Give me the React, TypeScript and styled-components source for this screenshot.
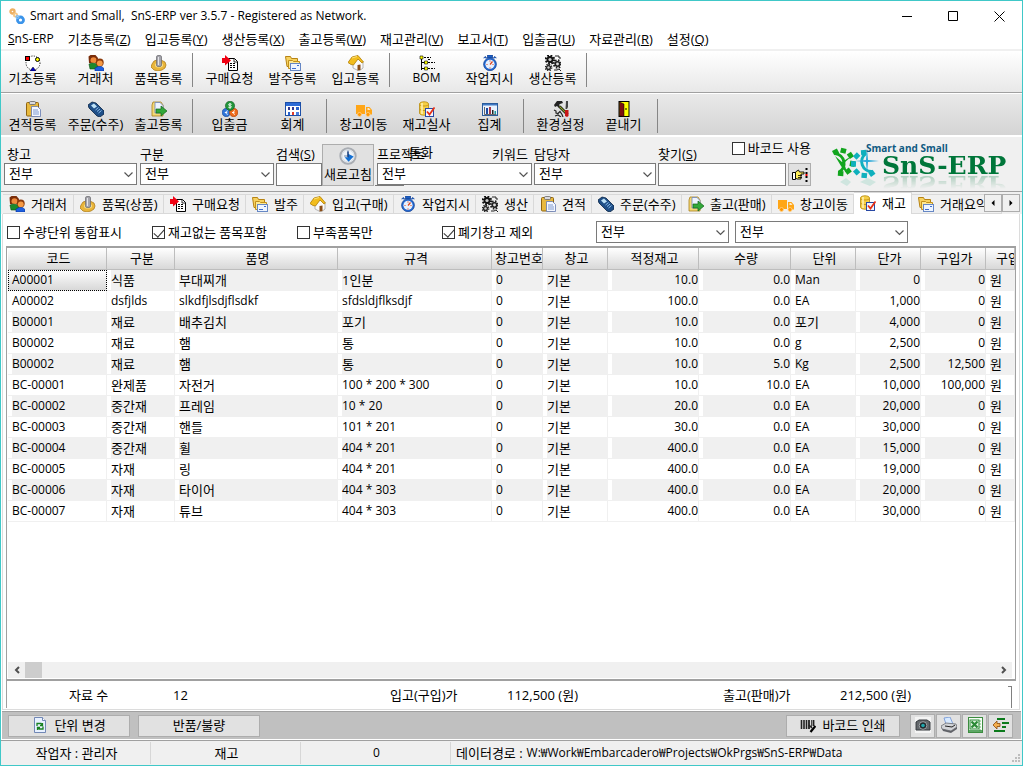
import React from "react";
import styled, { createGlobalStyle, css } from "styled-components";

const GlobalStyle = createGlobalStyle`
  * { box-sizing: border-box; }
  body { margin: 0; background: #fff; }
  body, button, input, select {
    font-family: "Open Sans", "Noto Sans CJK KR", sans-serif;
    font-size: 13px;
    line-height: 16px;
    color: #000;
  }
`;

/* ---------- icons ---------- */

type IconName =
  | "basic" | "people" | "item" | "request" | "folders" | "house" | "bom" | "watch" | "gears"
  | "clipboard" | "phone" | "ship" | "coins" | "calendar" | "truck" | "stock" | "chart"
  | "tools" | "door" | "links" | "clock" | "hand" | "page" | "barcode" | "camera" | "printer"
  | "excel" | "exit";

const Gear = ({ cx, cy, r, fill, hole }: { cx: number; cy: number; r: number; fill: string; hole: string }) => (
  <g>
    <circle cx={cx} cy={cy} r={r} fill="none" stroke={fill} strokeWidth={r * 0.6} strokeDasharray={`${r * 0.42} ${r * 0.365}`} />
    <circle cx={cx} cy={cy} r={r * 0.85} fill={fill} />
    <circle cx={cx} cy={cy} r={r * 0.4} fill={hole} />
  </g>
);

const drawings: Record<IconName, React.ReactNode> = {
  basic: (
    <>
      <circle cx="8" cy="8" r="7" fill="#fff" stroke="#000" strokeDasharray="1 1.4" />
      <rect x="0.5" y="1.5" width="4" height="4" fill="#f00" stroke="#000" />
      <circle cx="12.5" cy="4.5" r="2" fill="#ff0" stroke="#000" />
      <path d="M8 12l3 4H5z" fill="#00c" stroke="#000" strokeWidth=".5" />
    </>
  ),
  people: (
    <>
      <path d="M.500 1.500l2-1.500h5l2.500 3-.500 5H1z" fill="#7a2d0a" />
      <circle cx="5.500" cy="5.200" r="3" fill="#f08a3c" />
      <path d="M2 14L1 9l3-1 6 1v5z" fill="#1c8a2c" stroke="#0c5015" strokeWidth=".6" />
      <circle cx="11.800" cy="7.500" r="3.900" fill="#8c3a0a" />
      <circle cx="11.800" cy="8.300" r="2.900" fill="#f59a45" />
      <path d="M7 16v-3l3-1.500h3.500l2.500 2V16z" fill="#1c5fe0" stroke="#0a2f90" strokeWidth=".6" />
    </>
  ),
  item: (
    <>
      <path d="M1 9l2-3 3-1h4l4 2 1 3-1 3-3 2-4 1-4-1-3-3z" fill="#e9b53a" stroke="#a87410" strokeWidth=".7" />
      <ellipse cx="8" cy="10" rx="4" ry="2.6" fill="#f8e08c" />
      <rect x="5.500" y="0.500" width="5" height="11" rx="1.5" fill="#a5a5ac" stroke="#65656c" strokeWidth=".7" />
      <path d="M7.5 2v8" stroke="#e5e5ea" />
    </>
  ),
  request: (
    <>
      <path d="M6.500 3.500h6l3 3v9h-9z" fill="#fff" stroke="#000" />
      <path d="M8 8.500h6M8 10.500h6M8 12.500h6" stroke="#000" strokeDasharray="2 1" fill="none" />
      <path d="M12 3.500v3.500h3.500" stroke="#000" strokeWidth=".8" fill="none" />
      <path d="M0 3h3V0l6 5.500-6 5V8H0z" fill="#f00012" />
    </>
  ),
  folders: (
    <>
      <path d="M.500 1.500h5l1 2h6v8H2z" fill="#f7d260" stroke="#b78313" />
      <path d="M3.500 5.500h4l1 1h6v7h-11z" fill="#fde995" stroke="#c2901c" />
      <rect x="5.500" y="8.500" width="10" height="7" fill="#eef5ff" stroke="#6687c4" />
      <path d="M7 13.500h4M12 10.500h2" stroke="#3d6cd0" />
    </>
  ),
  house: (
    <>
      <path d="M5 7v6l6 3 4-3V7l-4-4z" fill="#fafafa" stroke="#9a9a9a" strokeWidth=".7" />
      <path d="M0 7.500L4 2l6-1.500L15.500 7l-1.500 1-4-4-4.500 6L3 9.500z" fill="#f2bd1d" stroke="#b17d05" strokeWidth=".8" />
      <path d="M4 3l5-1.500" stroke="#fbe27a" />
      <path d="M9.500 10l3-.500V15l-3 .500z" fill="#8a4d16" />
    </>
  ),
  bom: (
    <>
      <path d="M2.500 2v13M3 7.500h3M3 13.500h3" stroke="#000" fill="none" />
      <path d="M5 2.500h7M9 7.500h7M9 13.500h7M9 4.500h3" stroke="#000" strokeDasharray="2 1" fill="none" />
      <path d="M1 1h3v3H1zM5.500 6h3v3h-3zM5.500 12h3v3h-3z" fill="#ff0" stroke="#000" strokeWidth=".6" />
    </>
  ),
  watch: (
    <>
      <path d="M5.500 0h5v3h-5zM1.500 3l2-1.500 1.500 2M14.500 3l-2-1.500-1.500 2" fill="#1c5fc4" stroke="#123f91" strokeWidth=".7" />
      <circle cx="8" cy="9.300" r="6.400" fill="#2468cf" stroke="#123f91" strokeWidth=".7" />
      <circle cx="8" cy="9.300" r="4.600" fill="#e6f1ff" />
      <path d="M8 9.500l2.500-3M8 5.500v1M8 12.500v1M4.500 9.500h1M10.500 9.500h1" stroke="#e0451c" strokeWidth="1.200" />
    </>
  ),
  gears: (
    <>
      <Gear cx={5} cy={4.500} r={4} fill="#111" hole="#ccc" />
      <Gear cx={12.500} cy={9} r={3.600} fill="#222" hole="#ddd" />
      <Gear cx={3.500} cy={12.500} r={3} fill="#222" hole="#ccc" />
      <path d="M10 1h4v2h2M9 15h3l2-1 2 2" stroke="#222" fill="none" />
    </>
  ),
  clipboard: (
    <>
      <rect x="1.500" y="1.500" width="12" height="13.500" rx="1" fill="#e8b93e" stroke="#8f6410" />
      <rect x="4.500" y="0.500" width="6" height="3" rx="1" fill="#d9d9de" stroke="#666" strokeWidth=".8" />
      <path d="M6.500 5.500h6l3 3v7h-9z" fill="#f5f8ff" stroke="#6279b0" strokeWidth=".8" />
      <path d="M8 9h5M8 11h6M8 13h6" stroke="#7f9ad0" />
    </>
  ),
  phone: (
    <>
      <path d="M0 4l4-3 4 1 8 8v3l-4 3-3-1-8-8z" fill="#1f4f88" stroke="#0a2444" strokeWidth=".8" />
      <path d="M3 4.500l3-2 3 3-3 2z" fill="#bfe3f7" />
      <path d="M7.500 9l3-2.500M9 10.500l3-2.500M10.500 12l3-2.500" stroke="#8fc2f0" strokeWidth="1" />
    </>
  ),
  ship: (
    <>
      <path d="M2 1h8l2 3v11H1V4z" fill="#f3d875" stroke="#a9801b" strokeWidth=".8" />
      <path d="M4 1.500h5l3 3V12H4z" fill="#eef4ff" stroke="#6d87bd" strokeWidth=".8" />
      <path d="M5 8h5V5l6 5-6 5v-3H5z" fill="#32a83a" stroke="#12641a" strokeWidth=".7" />
    </>
  ),
  coins: (
    <>
      <circle cx="4.300" cy="11.500" r="4.200" fill="#2f74d8" stroke="#174591" strokeWidth=".6" />
      <circle cx="11.700" cy="11.500" r="4.200" fill="#ee6b1a" stroke="#a23c08" strokeWidth=".6" />
      <circle cx="8" cy="4.800" r="4.600" fill="#22963a" stroke="#0e5a1e" strokeWidth=".6" />
      <path d="M9.600 3.400c-3-1.400-4.200.900-1.600 1.400s1.400 2.800-1.700 1.400M8 2v5.800M5.800 9.800c-2.500 0-2.500 3.500 0 3.500M2.800 11.500h2.500M13 9.800c-2.500 0-2.500 3.500 0 3.500M10 11.500h2.500" stroke="#fff" fill="none" strokeWidth=".9" />
    </>
  ),
  calendar: (
    <>
      <rect x="0.500" y="1.500" width="15" height="13" fill="#fff" stroke="#1c4fa8" />
      <path d="M1 2h14v3H1z" fill="#2c6bd6" />
      <path d="M3 6h2v3H3zM7 6h2v3H7z" fill="#333a90" />
      <path d="M11 6h3v3h-3zM3 11h2v3H3z" fill="#2a62c9" />
      <path d="M7 11h2v3H7z" fill="#e03a28" />
      <path d="M11 11h3v3h-3z" fill="#4b7fe0" />
    </>
  ),
  truck: (
    <>
      <path d="M0 4h9v9H0zM10 6h3.500L16 9v4.500h-6z" fill="#ffa617" />
      <path d="M11.500 7h1.500l1.500 2h-3z" fill="#ffe9c4" />
      <circle cx="3.500" cy="13.500" r="2" fill="#ff9500" stroke="#ffd28a" strokeWidth=".8" />
      <circle cx="12" cy="13.500" r="2" fill="#ff9500" stroke="#ffd28a" strokeWidth=".8" />
    </>
  ),
  stock: (
    <>
      <path d="M.500 3c0-3 9-3 9 0v9c0 3-9 3-9 0z" fill="#f6cf45" stroke="#b68a0e" strokeWidth=".8" />
      <path d="M.500 3.500c1 2 8 2 9 0M.500 8c1 2 8 2 9 0" stroke="#c8991a" fill="none" />
      <path d="M3 2v11" stroke="#fff3b8" strokeWidth="1.500" />
      <rect x="6.500" y="7.500" width="8" height="8" fill="#f3f7ff" stroke="#2848a4" />
      <path d="M8 10.500l2.500 3 5-7" stroke="#e83015" strokeWidth="1.800" fill="none" />
    </>
  ),
  chart: (
    <>
      <rect x="0.500" y="2.500" width="15" height="12" fill="#eaf3ff" stroke="#2b5c9c" />
      <path d="M1 3h14v1.500H1z" fill="#3f79c4" />
      <path d="M2.500 6v7.500h12" stroke="#444" strokeWidth=".8" fill="none" />
      <path d="M4 7h2v6H4z" fill="#1c4aa0" />
      <path d="M7 6h2v7H7z" fill="#a63a4a" />
      <path d="M10 9h1.500v4H10z" fill="#222" />
      <path d="M12.500 10H14v3h-1.500z" fill="#1e9a9a" />
    </>
  ),
  tools: (
    <>
      <path d="M1 4l3-4h5l1 2-3 1-1 1 2 2-2 1-2-2-2 1z" fill="#222" />
      <path d="M6.500 5.500l8 8" stroke="#000" strokeWidth="2.600" />
      <path d="M6.500 5.500l8 8" stroke="#8aa02c" strokeWidth="1.200" />
      <path d="M13 0h2v6l-1 2h-1.500z" fill="#444" />
      <path d="M12 9h3.500v6l-1.500 1-2-1z" fill="#c81616" />
      <path d="M1 9l2 1v2l2 .500 2-2 2 3 1 2.500M2 15l3-1 3 2" fill="none" stroke="#222" strokeWidth="1.200" />
    </>
  ),
  door: (
    <>
      <rect x="3" y="0.500" width="10" height="15" fill="#ff0" stroke="#000" />
      <path d="M3.500 1L8 3v12.500l-4.500-.500z" fill="#7d1010" stroke="#000" strokeWidth=".5" />
      <path d="M9.500 7l1 1-1 1" stroke="#000" fill="none" />
    </>
  ),
  links: (
    <>
      <circle cx="3.500" cy="3.500" r="2" fill="none" stroke="#eeb062" strokeWidth="2.400" />
      <circle cx="6.500" cy="7" r="1.600" fill="none" stroke="#f5c686" strokeWidth="1.800" />
      <circle cx="11.500" cy="12" r="3" fill="none" stroke="#3b94ea" strokeWidth="2.800" />
      <circle cx="8.500" cy="9" r="1.400" fill="none" stroke="#79bbf5" strokeWidth="1.400" />
    </>
  ),
  clock: (
    <>
      <circle cx="8" cy="8" r="6.800" fill="#eef3f8" stroke="#a9adb3" strokeWidth="1.800" />
      <circle cx="8" cy="8" r="5.300" fill="none" stroke="#d5dae0" strokeWidth=".8" />
      <path d="M8 3v5M4.500 8h4" stroke="#5f7ca0" strokeWidth=".8" />
      <path d="M5 9h3V6l5 2.500L8.500 13z" fill="#126fd2" />
      <path d="M8 4v5" stroke="#123a7c" strokeWidth="1.200" />
    </>
  ),
  hand: (
    <>
      <path d="M.500 5.500h3v7h-3z" fill="#fff" stroke="#000" />
      <path d="M3.500 5l3-2 1 2H12v2H9v5H5l-1.500-1z" fill="#ffef5a" stroke="#000" strokeWidth=".9" />
      <path d="M6 8.500h4M6 10.500h4" stroke="#000" strokeWidth=".8" />
      <path d="M14.500 1v14" stroke="#000" strokeWidth="2" strokeDasharray="2 2" />
      <path d="M14.500 7v2" stroke="#e00" strokeWidth="2" />
    </>
  ),
  page: (
    <>
      <path d="M2.500.500h8l3 3v12h-11z" fill="#e8f1ff" stroke="#7187b5" />
      <path d="M10.500.500v3h3" fill="#fff" stroke="#7187b5" />
      <path d="M5 9V6.500h4l1.500 1.500M11 9.500V12H7l-1.500-1.500M10.500 6v2.500H8M5.500 13v-2.500H8" stroke="#178020" strokeWidth="1.300" fill="none" />
    </>
  ),
  barcode: (
    <>
      <path d="M1.500 3v9M4 3v9M6.500 3v9" stroke="#222" strokeWidth="1.600" />
      <path d="M9 3v9M13.500 3v6" stroke="#222" strokeWidth="1.800" />
      <path d="M11.500 3v7" stroke="#222" strokeWidth=".8" />
      <path d="M9 8l3 3" stroke="#222" strokeWidth="1.500" />
      <path d="M15.500 9l-5 6" stroke="#000" strokeWidth="2.200" />
    </>
  ),
  camera: (
    <>
      <path d="M0 0h16v16H0z" fill="#f4f4f4" />
      <path d="M1 5l3-2h8l3 2v8H1z" fill="#63676b" stroke="#34383c" />
      <circle cx="8" cy="8.500" r="3.800" fill="#22282c" stroke="#a7abaf" strokeWidth=".9" />
      <circle cx="8" cy="8.500" r="1.800" fill="#21a7ad" />
    </>
  ),
  printer: (
    <>
      <path d="M3 1l6-1 3 7H5z" fill="#d8eaff" stroke="#6c92d4" strokeWidth=".8" />
      <path d="M0 9l5-3 10 1 1 3-6 4L1 12z" fill="#d2d4d8" stroke="#6c6e74" strokeWidth=".8" />
      <path d="M1 12l9 2 6-4v2l-6 4-8-2z" fill="#606268" />
      <path d="M4 9l7 1 3-2" stroke="#222" fill="none" />
    </>
  ),
  excel: (
    <>
      <rect x="1.500" y=".500" width="14" height="15" fill="#f6fff6" stroke="#3c8c40" />
      <path d="M12 4h2M12 7h2M12 10h2M12 13h2" stroke="#6fb874" />
      <rect x="3" y="3" width="9" height="9" fill="#dff3df" stroke="#2b8a36" />
      <path d="M4.500 4.500l6 6M10.500 4.500l-6 6" stroke="#2b8a36" strokeWidth="2.200" />
      <path d="M2 14h13" stroke="#2b8a36" strokeWidth="1.500" />
    </>
  ),
  exit: (
    <>
      <path d="M4 2h8M9 6h7M9 10h4M1 14h11" stroke="#0c7a1c" strokeWidth="2.200" />
      <path d="M0 8l4-4v2.500h3v3H4V12z" fill="#f5b050" stroke="#8c4a0c" strokeWidth=".8" />
    </>
  ),
};

const IconSvg = styled.svg`
  display: block;
  flex: none;
`;

const Icon = ({ name, size = 16 }: { name: IconName; size?: number }) => (
  <IconSvg width={size} height={size} viewBox="0 0 16 16" aria-hidden="true">
    {drawings[name]}
  </IconSvg>
);

/* ---------- window ---------- */

const Window = styled.div`
  display: flex;
  flex-direction: column;
  min-height: calc(100vh - 2px);
  margin-right: 1px;
  border: 1px solid #40c8c8;
  background: #fff;
  white-space: nowrap;
  overflow: hidden;
`;

const TitleBar = styled.header`
  display: flex;
  align-items: center;
  height: 30px;
  padding-left: 8px;
`;

const Title = styled.h1`
  flex: 1;
  margin: 0 0 0 5px;
  font-size: 12px;
  font-weight: 400;
  white-space: pre;
`;

const WindowButton = styled.button`
  display: grid;
  place-items: center;
  width: 46px;
  height: 28px;
  padding: 0;
  border: 0;
  background: none;
`;

const MenuBar = styled.nav`
  display: flex;
  gap: 14px;
  height: 20px;
  padding: 0 7px 2px;
  border-bottom: 2px solid #f0f0f0;
`;

const MenuItem = styled.button<{ $latin?: boolean }>`
  padding: 0;
  border: 0;
  background: none;
  font-size: ${(p) => (p.$latin ? 12 : 13)}px;
`;

const Toolbar = styled.div<{ $second?: boolean }>`
  display: flex;
  ${(p) =>
    p.$second
      ? css`
          height: 43px;
          padding-top: 3px;
          background: linear-gradient(#e9e9e9, #d4d4d4);
          border-bottom: 2px solid #fff;
        `
      : css`
          height: 42px;
          background: linear-gradient(#fff, #e8e8e8);
          border-bottom: 1px solid #a0a0a0;
          margin-bottom: 1px;
        `}
`;

const ToolButton = styled.button`
  display: flex;
  flex-direction: column;
  align-items: center;
  width: 63px;
  padding: 4px 0 0;
  border: 0;
  background: none;
  line-height: 14px;
`;

const Separator = styled.span`
  width: 8px;
  height: 36px;
  margin-top: 2px;
  padding-left: 2px;
  &::before {
    content: "";
    display: block;
    width: 1px;
    height: 34px;
    background: #868686;
  }
`;

/* ---------- filters ---------- */

const FilterBar = styled.section`
  display: flex;
  align-items: flex-start;
  height: 55px;
  padding: 7px 2px 0 3px;
  background: #f0f0f0;
  border-bottom: 1px solid #a0a0a0;
`;

const Field = styled.div<{ $w: number; $gap?: number }>`
  position: relative;
  flex: none;
  width: ${(p) => p.$w}px;
  margin-right: ${(p) => p.$gap ?? 2}px;
`;

const FieldTop = styled.div<{ $indent?: boolean }>`
  display: flex;
  justify-content: space-between;
  height: 19px;
  padding: 2px 4px 0 ${(p) => (p.$indent ? 3 : 0)}px;
`;

const FindTop = styled.div`
  display: flex;
  align-items: flex-end;
  justify-content: space-between;
  height: 23px;
  margin-top: -4px;
  padding-bottom: 1px;
`;

const Overprint = styled.span`
  position: absolute;
  left: 32px;
  top: 0;
`;

const Underline = styled.span`
  position: absolute;
  left: -2px;
  bottom: -1px;
  width: 29px;
  height: 1px;
  background: #7a7a7a;
`;

const SelectBox = styled.span<{ $w?: number }>`
  position: relative;
  display: block;
  flex: none;
  width: ${(p) => (p.$w ? `${p.$w}px` : "100%")};
  svg {
    position: absolute;
    right: 4px;
    top: 9px;
    pointer-events: none;
  }
`;

const NativeSelect = styled.select`
  display: block;
  width: 100%;
  height: 22px;
  padding: 0 20px 2px 4px;
  border: 1px solid #7a7a7a;
  border-radius: 0;
  background: #fff;
  appearance: none;
`;

const Select = ({ id, label, w }: { id: string; label?: string; w?: number }) => (
  <SelectBox $w={w}>
    <NativeSelect id={id} aria-label={label}>
      <option>전부</option>
    </NativeSelect>
    <svg width="9" height="6" viewBox="0 0 9 6" aria-hidden="true">
      <path d="M.5.500l4 4 4-4" fill="none" stroke="#555" strokeWidth="1.200" />
    </svg>
  </SelectBox>
);

const TextInput = styled.input`
  display: block;
  flex: 1;
  width: 100%;
  min-width: 0;
  height: 23px;
  border: 1px solid #7a7a7a;
  background: #fff;
`;

const RefreshButton = styled.button`
  display: flex;
  flex-direction: column;
  align-items: center;
  flex: none;
  width: 52px;
  height: 42px;
  margin-right: 3px;
  padding: 2px 0 0;
  border: 1px solid #adadad;
  background: #e1e1e1;
  gap: 1px;
`;

const SearchRow = styled.div`
  display: flex;
  gap: 2px;
`;

const HandButton = styled.button`
  display: grid;
  place-items: center;
  width: 23px;
  height: 23px;
  padding: 0;
  border: 1px solid #adadad;
  background: #e1e1e1;
`;

const CheckLabel = styled.label<{ $w?: number; $raised?: boolean }>`
  display: flex;
  align-items: center;
  align-self: ${(p) => (p.$raised ? "flex-start" : "auto")};
  flex: none;
  gap: 3px;
  height: 16px;
  width: ${(p) => (p.$w ? `${p.$w}px` : "auto")};
`;

const CheckBox = styled.input`
  position: relative;
  width: 13px;
  height: 13px;
  margin: 0;
  border: 1px solid #333;
  background: #fff;
  appearance: none;
  &:checked::after {
    content: "";
    position: absolute;
    left: 3px;
    top: 0;
    width: 5px;
    height: 9px;
    border: solid #333;
    border-width: 0 1px 1px 0;
    transform: rotate(42deg);
  }
`;

const Logo = styled.div`
  display: flex;
  flex: none;
  margin-left: 15px;
`;

const LogoWords = styled.div`
  margin-left: -14px;
`;

const Slogan = styled.div`
  font-size: 10px;
  font-weight: 700;
  line-height: 8px;
  color: #0f5a82;
`;

const Brand = styled.div`
  margin: 2px 0 0 16px;
  height: 24px;
  font: 700 25px/24px "DejaVu Serif", serif;
  color: #00763a;
  -webkit-box-reflect: below -6px linear-gradient(transparent 30%, rgba(0, 0, 0, 0.35));
`;

/* ---------- tabs ---------- */

const TabStrip = styled.div`
  position: relative;
  display: flex;
  align-items: flex-end;
  height: 22px;
  padding-left: 2px;
  background: #f0f0f0;
  overflow: hidden;
`;

const Tab = styled.button<{ $w: number; $active?: boolean }>`
  display: flex;
  flex: none;
  align-items: center;
  gap: 6px;
  width: ${(p) => p.$w}px;
  height: ${(p) => (p.$active ? 22 : 20)}px;
  padding: ${(p) => (p.$active ? "0 0 2px 6px" : "0 0 0 6px")};
  border: 1px solid #d9d9d9;
  border-width: 1px 1px ${(p) => (p.$active ? 0 : 1)}px 0;
  background: ${(p) => (p.$active ? "#fff" : "#f0f0f0")};
  overflow: hidden;
`;

const Spinner = styled.div`
  position: absolute;
  right: 2px;
  top: 2px;
  display: flex;
  background: #f0f0f0;
`;

const SpinButton = styled.button`
  display: grid;
  place-items: center;
  width: 18px;
  height: 18px;
  padding: 0;
  border: 1px solid #adadad;
  background: #f0f0f0;
`;

const Page = styled.main`
  display: flex;
  flex: 1;
  flex-direction: column;
  margin: 0 2px 0 1px;
  border: solid #dcdcdc;
  border-width: 0 1px 1px;
`;

const Options = styled.div`
  display: flex;
  align-items: center;
  height: 32px;
  padding: 4px 0 0 4px;
`;

const OptionSelects = styled.div`
  display: flex;
  gap: 6px;
  margin-left: 9px;
`;

/* ---------- stock table ---------- */

const Sheet = styled.div`
  display: flex;
  flex: 1;
  flex-direction: column;
  margin: 0 3px 0 3px;
  padding-left: 1px;
  border: solid #a0a0a0;
  border-width: 2px 1px;
  overflow: hidden;
`;

const Table = styled.table`
  width: 100%;
  table-layout: fixed;
  border-collapse: separate;
  border-spacing: 0;
`;

const HeadCell = styled.th<{ $clip?: boolean }>`
  height: 22px;
  padding: 0 0 2px ${(p) => (p.$clip ? 10 : 3)}px;
  border: solid #bdbdbd;
  border-width: 0 1px 1px 0;
  background: linear-gradient(#fff, #d8d8d8);
  font-weight: 400;
  text-align: ${(p) => (p.$clip ? "left" : "center")};
  overflow: hidden;
`;

const Cell = styled.td<{ $right?: boolean; $selected?: boolean; $latin?: boolean }>`
  height: 21px;
  padding: 0 0 1px 4px;
  border: solid #f0f0f0;
  border-width: 0 1px 1px 0;
  font-size: ${(p) => (p.$latin ? 12 : 13)}px;
  text-align: ${(p) => (p.$right ? "right" : "left")};
  overflow: hidden;
  tr:nth-child(odd) > & {
    background: linear-gradient(to right, #fff 4px, #f0f0f0 4px);
  }
  ${(p) =>
    p.$selected &&
    css`
      && {
        background: linear-gradient(#fff, #d8d8d8) !important;
        outline: 1px dotted #000;
        outline-offset: -1px;
      }
    `}
`;

const ScrollBar = styled.div`
  display: flex;
  align-items: center;
  justify-content: space-between;
  height: 16px;
  margin: auto 3px 1px 0;
  background: #f0f0f0;
`;

const ScrollButton = styled.button`
  display: grid;
  place-items: center;
  width: 17px;
  height: 16px;
  padding: 0;
  border: 0;
  background: none;
`;

const Thumb = styled.span`
  width: 17px;
  height: 16px;
  margin-right: auto;
  background: #cdcdcd;
`;

const Summary = styled.dl`
  display: flex;
  align-items: center;
  height: 27px;
  margin: 0 3px 1px 3px;
  padding-left: 62px;
  border-left: 1px solid #a0a0a0;
  dt, dd { margin: 0; flex: none; }
  div { display: flex; flex: none; }
`;

const Total = styled.div<{ $w: number; $label: number }>`
  width: ${(p) => p.$w}px;
  dt { width: ${(p) => p.$label}px; }
`;

const Bracket = styled.span`
  align-self: flex-end;
  width: 4px;
  height: 22px;
  margin-left: auto;
  margin-right: 4px;
  border: solid #808080;
  border-width: 1px 1px 0 0;
`;

/* ---------- bottom bars ---------- */

const ActionBar = styled.div`
  display: flex;
  align-items: center;
  height: 28px;
  margin: 1px 1px 1px 1px;
  padding: 0 8px 0 6px;
  border-top: 1px solid #a0a0a0;
  background: #c0c0c0;
`;

const ActionButton = styled.button<{ $w: number; $push?: boolean }>`
  display: flex;
  flex: none;
  align-items: center;
  justify-content: center;
  gap: 6px;
  width: ${(p) => p.$w}px;
  height: ${(p) => (p.$w < 30 ? 24 : 22)}px;
  margin-left: ${(p) => (p.$push ? "auto" : 0)};
  padding: 0 0 1px;
  border: 1px solid #adadad;
  background: #e1e1e1;
`;

const ButtonSet = styled.div<{ $gap: number }>`
  display: flex;
  gap: ${(p) => p.$gap}px;
  &:last-child { margin-left: 10px; }
`;

const StatusBar = styled.footer`
  display: flex;
  align-items: center;
  height: 25px;
  border-top: 1px solid #a0a0a0;
  background: #f0f0f0;
`;

const StatusPane = styled.div<{ $wide?: boolean }>`
  display: flex;
  align-items: center;
  justify-content: ${(p) => (p.$wide ? "flex-start" : "center")};
  flex: ${(p) => (p.$wide ? "1" : "none")};
  gap: 4px;
  width: 150px;
  height: 22px;
  padding-left: ${(p) => (p.$wide ? 5 : 2)}px;
  border-right: ${(p) => (p.$wide ? 0 : 1)}px solid #d7d7d7;
`;

const Latin = styled.span`
  font-size: 12px;
`;

const Grip = styled.svg`
  align-self: flex-end;
  margin: 0 1px 2px 0;
`;

/* ---------- data ---------- */

const menus: [string, string][] = [
  ["기초등록", "Z"], ["입고등록", "Y"], ["생산등록", "X"], ["출고등록", "W"], ["재고관리", "V"],
  ["보고서", "T"], ["입출금", "U"], ["자료관리", "R"], ["설정", "Q"],
];

const firstTools: [IconName, string][][] = [
  [["basic", "기초등록"], ["people", "거래처"], ["item", "품목등록"]],
  [["request", "구매요청"], ["folders", "발주등록"], ["house", "입고등록"]],
  [["bom", "BOM"], ["watch", "작업지시"], ["gears", "생산등록"]],
];

const secondTools: [IconName, string][][] = [
  [["clipboard", "견적등록"], ["phone", "주문(수주)"], ["ship", "출고등록"]],
  [["coins", "입출금"], ["calendar", "회계"]],
  [["truck", "창고이동"], ["stock", "재고실사"], ["chart", "집계"]],
  [["tools", "환경설정"], ["door", "끝내기"]],
];

const tabs: [IconName, string, number][] = [
  ["people", "거래처", 71], ["item", "품목(상품)", 90], ["request", "구매요청", 82],
  ["folders", "발주", 58], ["house", "입고(구매)", 90], ["watch", "작업지시", 82],
  ["gears", "생산", 58], ["clipboard", "견적", 58], ["phone", "주문(수주)", 90],
  ["ship", "출고(판매)", 90], ["truck", "창고이동", 82], ["stock", "재고", 58],
  ["folders", "거래요약", 90],
];

const columns: [string, number][] = [
  ["코드", 99], ["구분", 68], ["품명", 163], ["규격", 154], ["창고번호", 51], ["창고", 65],
  ["적정재고", 91], ["수량", 92], ["단위", 65], ["단가", 65], ["구입가", 65], ["구입단위", 0],
];

const rows: string[][] = [
  ["A00001", "식품", "부대찌개", "1인분", "0", "기본", "10.0", "0.0", "Man", "0", "0", "원"],
  ["A00002", "dsfjlds", "slkdfjlsdjflsdkf", "sfdsldjflksdjf", "0", "기본", "100.0", "0.0", "EA", "1,000", "0", "원"],
  ["B00001", "재료", "배추김치", "포기", "0", "기본", "10.0", "0.0", "포기", "4,000", "0", "원"],
  ["B00002", "재료", "햄", "통", "0", "기본", "10.0", "0.0", "g", "2,500", "0", "원"],
  ["B00002", "재료", "햄", "통", "0", "기본", "10.0", "5.0", "Kg", "2,500", "12,500", "원"],
  ["BC-00001", "완제품", "자전거", "100 * 200 * 300", "0", "기본", "10.0", "10.0", "EA", "10,000", "100,000", "원"],
  ["BC-00002", "중간재", "프레임", "10 * 20", "0", "기본", "20.0", "0.0", "EA", "20,000", "0", "원"],
  ["BC-00003", "중간재", "핸들", "101 * 201", "0", "기본", "30.0", "0.0", "EA", "30,000", "0", "원"],
  ["BC-00004", "중간재", "휠", "404 * 201", "0", "기본", "400.0", "0.0", "EA", "15,000", "0", "원"],
  ["BC-00005", "자재", "링", "404 * 201", "0", "기본", "400.0", "0.0", "EA", "19,000", "0", "원"],
  ["BC-00006", "자재", "타이어", "404 * 303", "0", "기본", "400.0", "0.0", "EA", "20,000", "0", "원"],
  ["BC-00007", "자재", "튜브", "404 * 303", "0", "기본", "400.0", "0.0", "EA", "30,000", "0", "원"],
];

const numericColumns = [6, 7, 9, 10];
const isLatin = (text: string) => !/[가-힣]/.test(text);

/* ---------- parts ---------- */

const ToolGroups = ({ groups }: { groups: [IconName, string][][] }) => (
  <>
    {groups.map((group) => (
      <React.Fragment key={group[0][1]}>
        {group.map(([icon, text]) => (
          <ToolButton key={text} type="button">
            <Icon name={icon} />
            {isLatin(text) ? <Latin>{text}</Latin> : text}
          </ToolButton>
        ))}
        <Separator />
      </React.Fragment>
    ))}
  </>
);

const Arrow = ({ d, fill }: { d: string; fill?: boolean }) => (
  <svg width="8" height="8" viewBox="0 0 8 8" aria-hidden="true">
    <path d={d} fill={fill ? "#000" : "none"} stroke={fill ? "none" : "#505050"} strokeWidth="2" />
  </svg>
);

const LogoGear = ({ x, y, color, turn }: { x: number; y: number; color: string; turn: number }) => (
  <g transform={`translate(${x} ${y}) rotate(${turn})`}>
    <path d="M-4 -9.500A10 10 0 0 1 -4 9.500" fill="none" stroke={color} strokeWidth="3" />
    {[-105, -65, -22, 22, 65, 105].map((a) => (
      <path key={a} d="M9 -3h5v5.500H9z" fill={color} transform={`rotate(${a})`} />
    ))}
  </g>
);

export default function App() {
  return (
    <>
      <GlobalStyle />
      <Window>
        <TitleBar>
          <Icon name="links" />
          <Title>{"Smart and Small,  SnS-ERP ver 3.5.7 - Registered as Network."}</Title>
          <WindowButton type="button" aria-label="최소화">
            <svg width="11" height="11"><path d="M0 5.500h10" stroke="#000" /></svg>
          </WindowButton>
          <WindowButton type="button" aria-label="최대화">
            <svg width="11" height="11"><path d="M.5.500h9v9h-9z" fill="none" stroke="#000" /></svg>
          </WindowButton>
          <WindowButton type="button" aria-label="닫기">
            <svg width="11" height="11"><path d="M.5.500l10 10M10.500.500l-10 10" stroke="#000" /></svg>
          </WindowButton>
        </TitleBar>

        <MenuBar>
          <MenuItem type="button" $latin><u>S</u>nS-ERP</MenuItem>
          {menus.map(([text, key]) => (
            <MenuItem type="button" key={key}>{text}(<u>{key}</u>)</MenuItem>
          ))}
        </MenuBar>

        <Toolbar><ToolGroups groups={firstTools} /></Toolbar>
        <Toolbar $second><ToolGroups groups={secondTools} /></Toolbar>

        <FilterBar>
          <Field $w={133} $gap={3}>
            <FieldTop $indent><label htmlFor="warehouse">창고</label></FieldTop>
            <Select id="warehouse" />
          </Field>
          <Field $w={134}>
            <FieldTop><label htmlFor="kind">구분</label></FieldTop>
            <Select id="kind" />
          </Field>
          <Field $w={46} $gap={0}>
            <FieldTop><label htmlFor="search">검색(<u>S</u>)</label></FieldTop>
            <TextInput id="search" />
          </Field>
          <RefreshButton type="button"><Icon name="clock" size={18} />새로고침</RefreshButton>
          <Field $w={155}>
            <FieldTop>
              <label htmlFor="project">프로젝트</label>
              <Overprint>통화</Overprint>
              <span>키워드</span>
            </FieldTop>
            <Select id="project" />
            <Underline />
          </Field>
          <Field $w={122}>
            <FieldTop><label htmlFor="manager">담당자</label></FieldTop>
            <Select id="manager" />
          </Field>
          <Field $w={153}>
            <FindTop>
              <label htmlFor="find">찾기(<u>S</u>)</label>
              <CheckLabel $raised><CheckBox type="checkbox" />바코드 사용</CheckLabel>
            </FindTop>
            <SearchRow>
              <TextInput id="find" />
              <HandButton type="button" aria-label="찾기"><Icon name="hand" /></HandButton>
            </SearchRow>
          </Field>
          <Logo>
            <svg width="52" height="44" viewBox="0 0 52 44" aria-hidden="true">
              <LogoGear x={13} y={18} color="#12a51e" turn={-12} />
              <LogoGear x={37} y={20} color="#0fb0bd" turn={160} />
              <path d="M1 21l13-3 11-7-9 8 4 12-7-9-6-10 7 6z" fill="#12a51e" />
              <path d="M27 17l11-1 1-12 1 12 11 1-11 1-1 12-1-12z" fill="#27a8d8" />
              <path d="M12 38l6-4 5 4-4 4zM32 38l8-4 8 4-6 4z" fill="#12a57e" opacity=".15" />
            </svg>
            <LogoWords>
              <Slogan>Smart and Small</Slogan>
              <Brand>SnS-ERP</Brand>
            </LogoWords>
          </Logo>
        </FilterBar>

        <TabStrip role="tablist">
          {tabs.map(([icon, text, w]) => (
            <Tab key={text} type="button" role="tab" $w={w} $active={text === "재고"} aria-selected={text === "재고"}>
              <Icon name={icon} />
              {text}
            </Tab>
          ))}
          <Spinner>
            <SpinButton type="button" aria-label="이전 탭"><Arrow d="M5.500 1v6l-3-3z" fill /></SpinButton>
            <SpinButton type="button" aria-label="다음 탭"><Arrow d="M2.500 1v6l3-3z" fill /></SpinButton>
          </Spinner>
        </TabStrip>

        <Page>
          <Options>
            <CheckLabel $w={145}><CheckBox type="checkbox" />수량단위 통합표시</CheckLabel>
            <CheckLabel $w={145}><CheckBox type="checkbox" defaultChecked />재고없는 품목포함</CheckLabel>
            <CheckLabel $w={145}><CheckBox type="checkbox" />부족품목만</CheckLabel>
            <CheckLabel $w={145}><CheckBox type="checkbox" defaultChecked />폐기창고 제외</CheckLabel>
            <OptionSelects>
              <Select id="group" label="분류" w={133} />
              <Select id="detail" label="세부 분류" w={173} />
            </OptionSelects>
          </Options>

          <Sheet>
            <Table>
              <colgroup>
                {columns.map(([name, w]) => <col key={name} width={w || undefined} />)}
              </colgroup>
              <thead>
                <tr>
                  {columns.map(([name, w]) => <HeadCell key={name} scope="col" $clip={!w}>{name}</HeadCell>)}
                </tr>
              </thead>
              <tbody>
                {rows.map((row, r) => (
                  <tr key={r}>
                    {row.map((text, c) => (
                      <Cell key={c} $right={numericColumns.includes(c)} $selected={r === 0 && c === 0} $latin={isLatin(text)}>
                        {text}
                      </Cell>
                    ))}
                  </tr>
                ))}
              </tbody>
            </Table>
            <ScrollBar>
              <ScrollButton type="button" aria-label="왼쪽"><Arrow d="M6 1L3 4l3 3" /></ScrollButton>
              <Thumb />
              <ScrollButton type="button" aria-label="오른쪽"><Arrow d="M2 1l3 3-3 3" /></ScrollButton>
            </ScrollBar>
          </Sheet>

          <Summary>
            <Total $w={321} $label={104}><dt>자료 수</dt><dd>12</dd></Total>
            <Total $w={333} $label={117}><dt>입고(구입)가</dt><dd>112,500 (원)</dd></Total>
            <Total $w={200} $label={117}><dt>출고(판매)가</dt><dd>212,500 (원)</dd></Total>
            <Bracket />
          </Summary>
        </Page>

        <ActionBar>
          <ButtonSet $gap={8}>
            <ActionButton type="button" $w={122}><Icon name="page" />단위 변경</ActionButton>
            <ActionButton type="button" $w={122}>반품/불량</ActionButton>
          </ButtonSet>
          <ActionButton type="button" $w={114} $push><Icon name="barcode" />바코드 인쇄</ActionButton>
          <ButtonSet $gap={1}>
            <ActionButton type="button" $w={25} aria-label="화면 저장"><Icon name="camera" /></ActionButton>
            <ActionButton type="button" $w={25} aria-label="인쇄"><Icon name="printer" /></ActionButton>
            <ActionButton type="button" $w={25} aria-label="엑셀"><Icon name="excel" /></ActionButton>
            <ActionButton type="button" $w={25} aria-label="닫기"><Icon name="exit" /></ActionButton>
          </ButtonSet>
        </ActionBar>

        <StatusBar>
          <StatusPane>작업자 : 관리자</StatusPane>
          <StatusPane>재고</StatusPane>
          <StatusPane><Latin>0</Latin></StatusPane>
          <StatusPane $wide>
            데이터경로 : <Latin>W:₩Work₩Embarcadero₩Projects₩OkPrgs₩SnS-ERP₩Data</Latin>
          </StatusPane>
          <Grip width="9" height="9" aria-hidden="true">
            <path d="M6 0h2v2H6zM3 3h2v2H3zM6 3h2v2H6zM0 6h2v2H0zM3 6h2v2H3zM6 6h2v2H6z" fill="#bdbdbd" />
          </Grip>
        </StatusBar>
      </Window>
    </>
  );
}
